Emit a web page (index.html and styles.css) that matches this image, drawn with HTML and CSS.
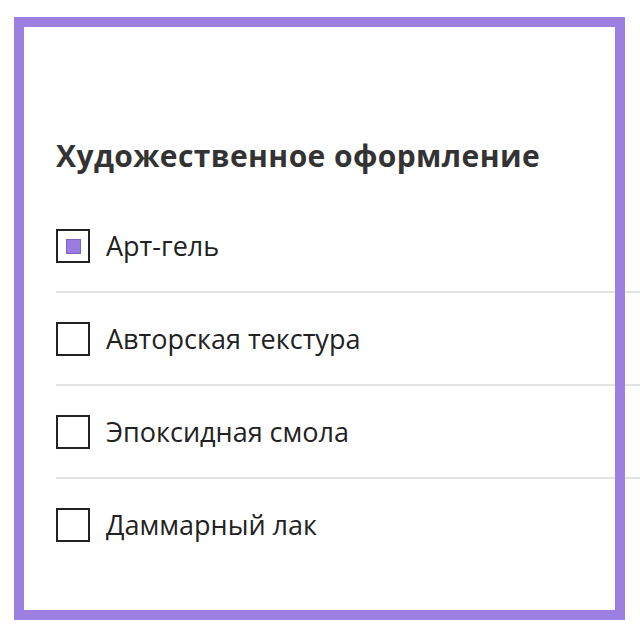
FILE: index.html
```html
<!DOCTYPE html>
<html lang="ru">
<head>
<meta charset="utf-8">
<title>Художественное оформление</title>
<link rel="stylesheet" href="styles.css">
</head>
<body>
<div class="page">
  <section class="panel">
    <h2 class="title">Художественное оформление</h2>
    <ul class="options">
      <li class="option"><span class="box checked"></span><span class="label">Арт-гель</span></li>
      <li class="option"><span class="box"></span><span class="label">Авторская текстура</span></li>
      <li class="option"><span class="box"></span><span class="label">Эпоксидная смола</span></li>
      <li class="option last"><span class="box"></span><span class="label">Даммарный лак</span></li>
    </ul>
  </section>
  <div class="frame"></div>
</div>
</body>
</html>
```
FILE: styles.css
```css
html, body {
  margin: 0;
  padding: 0;
  background: #ffffff;
}
.page {
  position: relative;
  width: 640px;
  height: 640px;
  overflow: hidden;
  font-family: "Open Sans", "Noto Sans", sans-serif;
}
.panel {
  padding: 138px 0 0 56px;
}
.title {
  margin: 0;
  font-size: 30px;
  font-weight: 700;
  line-height: 36px;
  letter-spacing: 0.4px;
  color: #333333;
}
.options {
  list-style: none;
  margin: 26px 0 0 0;
  padding: 0;
}
.option {
  display: flex;
  align-items: center;
  gap: 16px;
  padding: 29px 0 28px 0;
  border-bottom: 2px solid #e3e3e3;
}
.option.last {
  border-bottom: none;
}
.box {
  width: 30px;
  height: 30px;
  border: 2px solid #222222;
  display: flex;
  align-items: center;
  justify-content: center;
  flex: none;
}
.box.checked::after {
  content: "";
  width: 13px;
  height: 13px;
  background: #9a7ce0;
  border: 1px solid #7f62c8;
}
.label {
  font-size: 27px;
  line-height: 34px;
  color: #222222;
}
.frame {
  position: absolute;
  left: 14px;
  top: 17px;
  width: 591px;
  height: 583px;
  border: 10px solid #9c7fe0;
  pointer-events: none;
}
```
